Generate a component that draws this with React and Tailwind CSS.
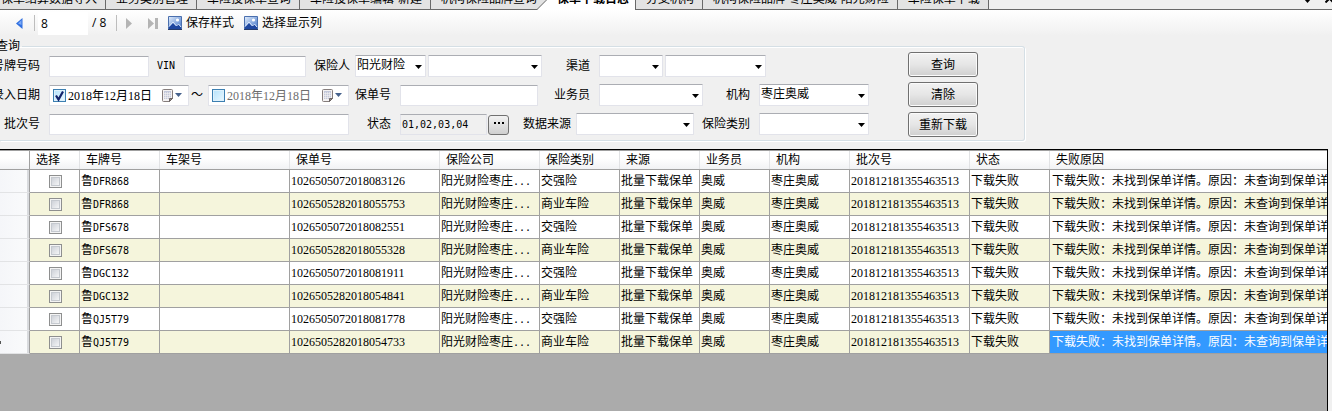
import { useState } from "react";

const TABS = ["保单结算数据导入", "业务类别管理", "车险投保单查询", "车险投保单编辑-新建", "机构保险品牌查询", "保单下载日志", "分支机构", "机构保险品牌-枣庄奥威-阳光财险", "车险保单下载"];

const COLUMNS = [
  { title: "选择", width: "w-[50px]" },
  { title: "车牌号", width: "w-[80px]" },
  { title: "车架号", width: "w-[130px]" },
  { title: "保单号", width: "w-[150px]" },
  { title: "保险公司", width: "w-[100px]" },
  { title: "保险类别", width: "w-[80px]" },
  { title: "来源", width: "w-[80px]" },
  { title: "业务员", width: "w-[70px]" },
  { title: "机构", width: "w-[80px]" },
  { title: "批次号", width: "w-[120px]" },
  { title: "状态", width: "w-[80px]" },
  { title: "失败原因", width: "w-auto" },
];

const ROWS = [
  { plate: "DFR868", policy: "1026505072018083126", kind: "交强险" },
  { plate: "DFR868", policy: "1026505282018055753", kind: "商业车险" },
  { plate: "DFS678", policy: "1026505072018082551", kind: "交强险" },
  { plate: "DFS678", policy: "1026505282018055328", kind: "商业车险" },
  { plate: "DGC132", policy: "1026505072018081911", kind: "交强险" },
  { plate: "DGC132", policy: "1026505282018054841", kind: "商业车险" },
  { plate: "QJ5T79", policy: "1026505072018081778", kind: "交强险" },
  { plate: "QJ5T79", policy: "1026505282018054733", kind: "商业车险" },
];

const BOX = "border border-[#e2e3ea] border-t-[#abadb3] bg-white rounded-[1px]";
const MONO = "font-['DejaVu_Sans_Mono','Noto_Sans_CJK_SC',monospace] text-[10px]";

function Label({ htmlFor, className, children }) {
  return <label htmlFor={htmlFor} className={`flex h-[22px] shrink-0 items-center justify-end whitespace-nowrap ${className}`}>{children}</label>;
}

function TextBox({ id, className }) {
  return <input id={id} type="text" className={`h-[21px] shrink-0 px-1 outline-none ${BOX} ${className}`} />;
}

function Combo({ id, label, value = "", className }) {
  return (
    <div className={`relative h-[22px] shrink-0 ${className}`}>
      <select id={id} aria-label={label} defaultValue={value} className={`block h-full w-full appearance-none pl-px pb-0.5 outline-none ${BOX}`}>
        <option value={value}>{value}</option>
      </select>
      <svg className="pointer-events-none absolute top-[10px] right-1" width="7" height="4" viewBox="0 0 7 4"><path d="M0 0h7L3.5 4z" fill="#000" /></svg>
    </div>
  );
}

function DateBox({ id, label, initial, className }) {
  const [on, setOn] = useState(initial);
  return (
    <div className={`flex h-[21px] shrink-0 items-center pl-[3px] pr-1.5 ${BOX} ${className}`}>
      <span className="relative size-[13px] shrink-0">
        <input type="checkbox" aria-label={`启用${label}`} checked={on} onChange={(e) => setOn(e.target.checked)} className="block size-[13px] appearance-none border border-[#3c7fb1] bg-linear-to-br from-[#b4e2fb] to-[#eaf8ff] ring-1 ring-[#dff1fb] ring-inset" />
        {on && <svg className="pointer-events-none absolute inset-0" width="13" height="13" viewBox="0 0 13 13"><path d="M3 6.5l2.5 4L10 2.5" fill="none" stroke="#12226b" strokeWidth="2.2" /></svg>}
      </span>
      <input id={id} type="text" aria-label={label} defaultValue="2018年12月18日" className={`ml-0.5 w-0 flex-1 bg-transparent outline-none ${on ? "text-black" : "text-[#6d6d6d]"}`} />
      <button type="button" aria-label={`选择${label}`} className="shrink-0">
        <svg width="20" height="13" viewBox="0 0 20 13">
          <path d="M1.500.5h8q1 0 1 1v8l-3 3h-6q-1 0-1-1v-10q0-1 1-1z" fill="#f4f2f2" stroke="#857d7c" />
          <path d="M2 2h7v8H2z" fill="#c3c8da" />
          <path d="M2 4.500h7M2 6.500h7M2 8.500h7M3.500 3v7M5.500 3v7M7.500 3v7" stroke="#f4f2f2" strokeWidth=".6" />
          <path d="M10.500 9.500h-3v3z" fill="#8f8886" stroke="#6b6463" />
          <path d="M13 4h7l-3.500 4z" fill="#45618c" />
        </svg>
      </button>
    </div>
  );
}

function PushButton({ children }) {
  return <button type="button" className="h-[25px] w-[70px] rounded-[3px] border border-[#707070] bg-linear-to-b from-[#f2f2f2] from-0% via-[#e6e6e6] via-50% to-[#cfcfcf] shadow-[inset_0_0_0_1px_#fbfbfb]">{children}</button>;
}

function PictureIcon() {
  return (
    <svg width="14" height="14" viewBox="0 0 14 14">
      <defs>
        <linearGradient id="sky" x1="0" y1="0" x2="1" y2="1"><stop offset="0" stopColor="#e4effc" /><stop offset="1" stopColor="#3c70c8" /></linearGradient>
      </defs>
      <path d="M.5.5h13v13H.5z" fill="url(#sky)" stroke="#4a6fae" />
      <path d="M1 11l4-4 3 3 2-2 3 3v2H1z" fill="#1f47a0" />
      <path d="M1 10.500L5 6l3.500 4L10.500 8l2.500 3" fill="none" stroke="#dbe8fb" />
      <circle cx="9.500" cy="4" r="1.600" fill="#fff" />
      <path d="M0 13.500h14" stroke="#263c6b" />
    </svg>
  );
}

function TabStrip() {
  const active = TABS.indexOf("保单下载日志");
  return (
    <nav className="flex h-[10px] items-end overflow-hidden font-['Open_Sans','Noto_Sans_CJK_SC',sans-serif]">
      {TABS.map((tab, i) => {
        if (i === active) {
          return (
            <div key={tab} className="flex h-5 shrink-0 items-end">
              <svg className="-ml-2" width="18" height="20" viewBox="0 0 18 20"><path d="M0 20L18 2v18z" fill="#fff" /><path d="M0 19.500L18 1.500" stroke="#696969" /></svg>
              <button type="button" className="h-5 border-r border-[#696969] bg-white pr-1.5 pb-0.5 pl-0.5 leading-4 font-bold whitespace-nowrap">{tab}</button>
            </div>
          );
        }
        return <button key={tab} type="button" className={`h-5 shrink-0 border-b border-[#696969] bg-[#e3e3e3] pb-px leading-4 whitespace-nowrap ${i === 0 ? "border-r pr-2 pl-px" : i === active - 1 ? "pr-2 pl-2.5" : "border-r pr-2 pl-2.5"}`}>{tab}</button>;
      })}
      <div className="flex h-5 flex-1 items-end justify-end gap-3.5 border-b border-[#696969] pb-1.5">
        <button type="button" aria-label="标签列表"><svg width="7" height="4" viewBox="0 0 7 4"><path d="M0 0h7L3.500 4z" /></svg></button>
        <button type="button" aria-label="关闭" className="-mr-0.5"><svg width="9" height="9" viewBox="0 0 9 9"><path d="M.5.5l8 8M8.500.5l-8 8" stroke="#000" strokeWidth="2" /></svg></button>
      </div>
    </nav>
  );
}

function Toolbar() {
  return (
    <div className="flex h-[26px] items-center bg-linear-to-b from-white to-[#f0f0f0] pl-4 font-['Open_Sans','Noto_Sans_CJK_SC',sans-serif]">
      <button type="button" aria-label="上一页"><svg width="7" height="11" viewBox="0 0 7 11"><path d="M6.500 0v11L0 5.500z" fill="#2f6fe0" /><path d="M5.500 2v5L2 5.500z" fill="#7ba8f5" /></svg></button>
      <span className="ml-[11px] h-4 w-px bg-[#bdbdbd]" />
      <input aria-label="当前页" defaultValue="8" className="ml-[3px] h-[23px] w-[50px] bg-white px-[3px] outline-none" />
      <span className="ml-1 w-6">/ 8</span>
      <span className="h-4 w-px bg-[#bdbdbd]" />
      <button type="button" aria-label="下一页" className="ml-[9px]"><svg width="6" height="11" viewBox="0 0 6 11"><path d="M0 0l6 5.500L0 11z" fill="#b4b4b4" /></svg></button>
      <button type="button" aria-label="末页" className="ml-4"><svg width="10" height="11" viewBox="0 0 10 11"><path d="M0 0l6 5.500L0 11zM7 0h3v11H7z" fill="#b4b4b4" /></svg></button>
      <button type="button" className="ml-2.5 flex items-center gap-1"><PictureIcon />保存样式</button>
      <button type="button" className="ml-2.5 flex items-center gap-1"><PictureIcon />选择显示列</button>
    </div>
  );
}

function QueryForm() {
  return (
    <fieldset className="mt-1 flex w-fit min-w-0 rounded-r-[3px] border border-l-0 border-[#d5dfe5] pr-[46px] pb-[3px] shadow-[1px_1px_0_#fff,inset_0_1px_0_#fff]">
      <legend className="-ml-1 pr-0.5 leading-3">查询</legend>
      <div className="flex flex-col gap-[7px] pt-[3px]">
        <div className="flex items-end">
          <Label htmlFor="plate" className="w-[49px] pr-[9px]"><span className="-ml-3">号牌号码</span></Label>
          <TextBox id="plate" className="w-[100px]" />
          <Label htmlFor="vin" className={`w-[35px] pr-[9px] ${MONO}`}>VIN</Label>
          <TextBox id="vin" className="w-[122px]" />
          <Label htmlFor="insurer" className="w-[49px] pr-[5px]">保险人</Label>
          <Combo id="insurer" value="阳光财险" className="w-[71px]" />
          <Combo label="保险人分支" className="ml-0.5 w-[114px]" />
          <Label htmlFor="channel" className="w-[57px] pr-[9px]">渠道</Label>
          <Combo id="channel" className="w-[64px]" />
          <Combo label="渠道明细" className="ml-0.5 w-[101px]" />
        </div>
        <div className="flex items-end">
          <Label htmlFor="from" className="w-[49px] pr-[9px]"><span className="-ml-3">录入日期</span></Label>
          <DateBox id="from" label="开始日期" initial={true} className="w-[140px]" />
          <span className="w-[19px] pl-0.5 leading-[22px]">～</span>
          <DateBox id="to" label="结束日期" initial={false} className="w-[141px]" />
          <Label htmlFor="policy" className="w-[51px] pr-[9px]">保单号</Label>
          <TextBox id="policy" className="w-[138px]" />
          <Label htmlFor="agent" className="w-[61px] pr-[9px]">业务员</Label>
          <Combo id="agent" className="w-[104px]" />
          <Label htmlFor="branch" className="w-[56px] pr-[9px]">机构</Label>
          <Combo id="branch" value="枣庄奥威" className="w-[110px]" />
        </div>
        <div className="flex items-end">
          <Label htmlFor="batch" className="w-[49px] pr-[9px]">批次号</Label>
          <TextBox id="batch" className="w-[300px]" />
          <Label htmlFor="status" className="w-[51px] pr-[9px]">状态</Label>
          <input id="status" readOnly defaultValue="01,02,03,04" className={`h-[21px] w-[87px] shrink-0 border border-[#e2e3ea] border-t-[#abadb3] bg-[#f0f0f0] px-px outline-none ${MONO}`} />
          <button type="button" aria-label="选择状态" className="ml-px flex h-5 w-[21px] shrink-0 items-center justify-center gap-[2px] rounded-[3px] border border-[#707070] bg-linear-to-b from-[#f2f2f2] to-[#cfcfcf] pb-1">
            <i className="size-[2px] bg-black" /><i className="size-[2px] bg-black" /><i className="size-[2px] bg-black" />
          </button>
          <Label htmlFor="source" className="w-[67px] pr-[5px]">数据来源</Label>
          <Combo id="source" className="w-[118px]" />
          <Label htmlFor="kind" className="w-[65px] pr-[9px]">保险类别</Label>
          <Combo id="kind" className="w-[110px]" />
        </div>
      </div>
      <div className="ml-[39px] flex flex-col gap-[5px]">
        <PushButton>查询</PushButton>
        <PushButton>清除</PushButton>
        <PushButton>重新下载</PushButton>
      </div>
    </fieldset>
  );
}

function LogTable() {
  const last = ROWS.length - 1;
  const cell = "h-[23px] overflow-hidden whitespace-nowrap border-r border-b border-[#a0a0a0] p-0 pl-px leading-4";
  return (
    <table className="w-full table-fixed border-separate border-spacing-0">
      <thead>
        <tr className="bg-linear-to-b from-white from-40% to-[#f0f1f3]">
          <th aria-label="行" className="h-5 w-[30px] border-t border-r border-b border-[#a0a0a0] p-0" />
          {COLUMNS.map((c, i) => (
            <th key={c.title} className={`h-5 border-t border-b border-[#a0a0a0] p-0 pl-1.5 text-left leading-4 font-normal whitespace-nowrap ${i < COLUMNS.length - 1 ? "shadow-[inset_-1px_0_0_#e2e3e5]" : ""} ${c.width}`}>{c.title}</th>
          ))}
        </tr>
      </thead>
      <tbody>
        {ROWS.map((row, i) => (
          <tr key={row.policy} className={i % 2 ? "bg-[#f5f5dc]" : "bg-white"}>
            <th className="h-[23px] border-r border-b border-r-[#a0a0a0] border-b-[#e2e3e5] bg-linear-to-r from-[#f5f6f9] to-[#fafbfc] p-0 text-left shadow-[inset_-2px_0_0_#d9dbde]">
              {i === last && <svg width="1" height="3" viewBox="0 0 1 3"><path d="M0 0h1v3H0z" fill="#555" /></svg>}
            </th>
            <td className={cell}>
              <input type="checkbox" aria-label={`选择 ${row.policy}`} className="mx-auto block size-[13px] appearance-none border border-[#8e8f8f] bg-linear-to-br from-[#c4c8d0] to-white shadow-[inset_0_0_0_1px_#f4f4f4,inset_0_0_0_2px_#c5c9cf] checked:bg-[#3399ff]" />
            </td>
            <td className={cell}>鲁<span className={MONO}>{row.plate}</span></td>
            <td className={cell} />
            <td className={cell}>{row.policy}</td>
            <td className={cell}>阳光财险枣庄<span className={MONO}>...</span></td>
            <td className={cell}>{row.kind}</td>
            <td className={cell}>批量下载保单</td>
            <td className={cell}>奥威</td>
            <td className={cell}>枣庄奥威</td>
            <td className={cell}>201812181355463513</td>
            <td className={cell}>下载失败</td>
            <td className={`h-[23px] overflow-hidden border-b border-[#a0a0a0] p-0 pl-0.5 leading-4 whitespace-nowrap ${i === last ? "bg-[#3399ff] text-white" : ""}`}>下载失败：未找到保单详情。原因：未查询到保单详情</td>
          </tr>
        ))}
      </tbody>
    </table>
  );
}

export default function App() {
  return (
    <div lang="zh-CN" className="flex min-h-screen flex-col overflow-hidden bg-[#f0f0f0] font-['Liberation_Serif','Noto_Sans_CJK_SC',serif] text-[12px] leading-4 text-black">
      <TabStrip />
      <Toolbar />
      <QueryForm />
      <main className="mt-2 mr-1 flex-1 overflow-hidden border-t border-r border-black bg-[#ababab]">
        <LogTable />
      </main>
    </div>
  );
}
